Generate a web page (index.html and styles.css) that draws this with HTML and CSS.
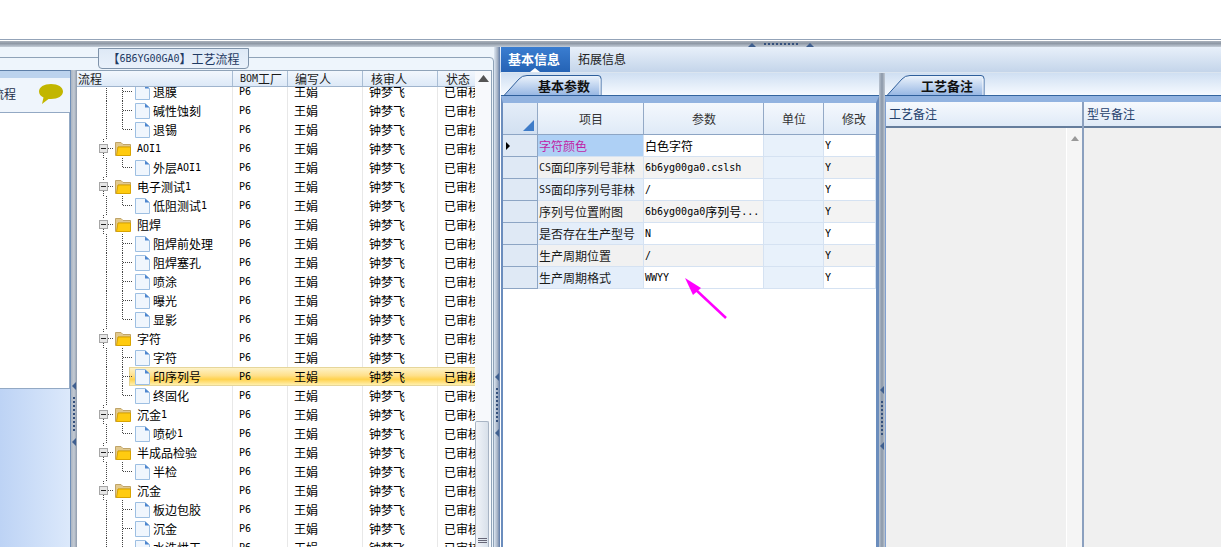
FILE: index.html
```html
<!DOCTYPE html>
<html lang="zh">
<head>
<meta charset="utf-8">
<title>工艺流程</title>
<link rel="stylesheet" href="styles.css">
</head>
<body>
<svg class="defs" width="0" height="0">
  <defs>
    <linearGradient id="tabfill" x1="0" y1="0" x2="0" y2="1">
      <stop offset="0" stop-color="#edf4fc"/>
      <stop offset="1" stop-color="#96b6e3"/>
    </linearGradient>
    <symbol id="tabshape" viewBox="0 0 98 22">
      <path d="M0 21.500L15 5Q18 1.500 23 1.500H94Q97 1.500 97 4.500V21.500Z" fill="url(#tabfill)" stroke="#2f5f9b"/>
      <path d="M96 5V21" stroke="#fff"/>
    </symbol>
    <symbol id="doc" viewBox="0 0 15 16">
      <path d="M.5.5H10L14.5 4.500V15.500H.5Z" fill="#f0f6fd" stroke="#9dbfe2"/>
      <path d="M10 .5V4.500H14.500Z" fill="#4d86cf"/>
    </symbol>
    <symbol id="folder" viewBox="0 0 16 14">
      <path d="M.5 13.500V.5H6L8 2.500H15.500V5H3V13.500Z" fill="#e2c98e" stroke="#c0a468"/>
      <path d="M3 5H15.500V13.500H1.500Z" fill="#ffcb10" stroke="#d9a400"/>
    </symbol>
    <symbol id="box" viewBox="0 0 9 9">
      <rect x=".5" y=".5" width="8" height="8" fill="#e6e6e6" stroke="#a6a6a6"/>
      <path d="M2 4.500H7" stroke="#222"/>
    </symbol>
    <symbol id="g-folder" viewBox="0 0 60 19">
      <path d="M26.500 0V4M26.500 14V19M31 9.500H36" stroke="#444" stroke-dasharray="1 1"/>
      <use href="#box" x="22" y="5" width="9" height="9"/>
      <use href="#folder" x="38" y="3" width="16" height="14"/>
    </symbol>
    <symbol id="g-mid" viewBox="0 0 70 19">
      <path d="M26.500 0V19M42.500 0V19M43 9.500H52" stroke="#444" stroke-dasharray="1 1"/>
      <use href="#doc" x="55" y="2" width="15" height="16"/>
    </symbol>
    <symbol id="g-last" viewBox="0 0 70 19">
      <path d="M26.500 0V19M42.500 0V9.500M43 9.500H52" stroke="#444" stroke-dasharray="1 1"/>
      <use href="#doc" x="55" y="2" width="15" height="16"/>
    </symbol>
  </defs>
</svg>

<div class="top-blank"></div>
<div class="h-split">
  <i class="tri-up"></i><span class="grip-h"></span><i class="tri-up"></i>
</div>

<main class="work">
  <section class="flow-group">
    <div class="flow-title">【<span class="mono">6B6YG00GA0</span>】工艺流程</div>
    <div class="flow-body">
      <aside class="side">
        <div class="side-band"></div>
        <div class="side-head">
          <span class="side-name">流程</span>
          <svg class="bubble" width="26" height="22" viewBox="0 0 26 22">
            <path d="M13 1C20 1 25 4 25 8.500S20 16 13 16H10.500L4 21L5.500 14.500C2.500 13 1 11 1 8.500C1 4 6 1 13 1Z" fill="#c2b600"/>
          </svg>
        </div>
        <div class="side-box"></div>
        <div class="side-rest"></div>
      </aside>

      <div class="v-split left-split">
        <i class="tri-left"></i><span class="grip-v"></span><i class="tri-left"></i>
      </div>

      <div class="tree-grid">
        <div class="tree-main">
          <div class="tree-head">
            <span class="th-tree">流程</span>
            <span class="th"><span class="mono">BOM</span>工厂</span>
            <span class="th">编写人</span>
            <span class="th th-w">核审人</span>
            <span class="th th-w">状态</span>
          </div>
          <div class="tree-view">
            <div class="tree-rows">
              <div class="row"><div class="tc"><svg class="g-c"><use href="#g-mid"/></svg>退膜</div><div class="c mono">P6</div><div class="c">王娟</div><div class="c">钟梦飞</div><div class="c">已审核</div></div>
              <div class="row"><div class="tc"><svg class="g-c"><use href="#g-mid"/></svg>碱性蚀刻</div><div class="c mono">P6</div><div class="c">王娟</div><div class="c">钟梦飞</div><div class="c">已审核</div></div>
              <div class="row"><div class="tc"><svg class="g-c"><use href="#g-last"/></svg>退锡</div><div class="c mono">P6</div><div class="c">王娟</div><div class="c">钟梦飞</div><div class="c">已审核</div></div>
              <div class="row"><div class="tc"><svg class="g-f"><use href="#g-folder"/></svg><span class="mono">AOI1</span></div><div class="c mono">P6</div><div class="c">王娟</div><div class="c">钟梦飞</div><div class="c">已审核</div></div>
              <div class="row"><div class="tc"><svg class="g-c"><use href="#g-last"/></svg>外层<span class="mono">AOI1</span></div><div class="c mono">P6</div><div class="c">王娟</div><div class="c">钟梦飞</div><div class="c">已审核</div></div>
              <div class="row"><div class="tc"><svg class="g-f"><use href="#g-folder"/></svg>电子测试<span class="mono">1</span></div><div class="c mono">P6</div><div class="c">王娟</div><div class="c">钟梦飞</div><div class="c">已审核</div></div>
              <div class="row"><div class="tc"><svg class="g-c"><use href="#g-last"/></svg>低阻测试<span class="mono">1</span></div><div class="c mono">P6</div><div class="c">王娟</div><div class="c">钟梦飞</div><div class="c">已审核</div></div>
              <div class="row"><div class="tc"><svg class="g-f"><use href="#g-folder"/></svg>阻焊</div><div class="c mono">P6</div><div class="c">王娟</div><div class="c">钟梦飞</div><div class="c">已审核</div></div>
              <div class="row"><div class="tc"><svg class="g-c"><use href="#g-mid"/></svg>阻焊前处理</div><div class="c mono">P6</div><div class="c">王娟</div><div class="c">钟梦飞</div><div class="c">已审核</div></div>
              <div class="row"><div class="tc"><svg class="g-c"><use href="#g-mid"/></svg>阻焊塞孔</div><div class="c mono">P6</div><div class="c">王娟</div><div class="c">钟梦飞</div><div class="c">已审核</div></div>
              <div class="row"><div class="tc"><svg class="g-c"><use href="#g-mid"/></svg>喷涂</div><div class="c mono">P6</div><div class="c">王娟</div><div class="c">钟梦飞</div><div class="c">已审核</div></div>
              <div class="row"><div class="tc"><svg class="g-c"><use href="#g-mid"/></svg>曝光</div><div class="c mono">P6</div><div class="c">王娟</div><div class="c">钟梦飞</div><div class="c">已审核</div></div>
              <div class="row"><div class="tc"><svg class="g-c"><use href="#g-last"/></svg>显影</div><div class="c mono">P6</div><div class="c">王娟</div><div class="c">钟梦飞</div><div class="c">已审核</div></div>
              <div class="row"><div class="tc"><svg class="g-f"><use href="#g-folder"/></svg>字符</div><div class="c mono">P6</div><div class="c">王娟</div><div class="c">钟梦飞</div><div class="c">已审核</div></div>
              <div class="row"><div class="tc"><svg class="g-c"><use href="#g-mid"/></svg>字符</div><div class="c mono">P6</div><div class="c">王娟</div><div class="c">钟梦飞</div><div class="c">已审核</div></div>
              <div class="row selected"><div class="tc"><svg class="g-c"><use href="#g-mid"/></svg>印序列号</div><div class="c mono">P6</div><div class="c">王娟</div><div class="c">钟梦飞</div><div class="c">已审核</div></div>
              <div class="row"><div class="tc"><svg class="g-c"><use href="#g-last"/></svg>终固化</div><div class="c mono">P6</div><div class="c">王娟</div><div class="c">钟梦飞</div><div class="c">已审核</div></div>
              <div class="row"><div class="tc"><svg class="g-f"><use href="#g-folder"/></svg>沉金<span class="mono">1</span></div><div class="c mono">P6</div><div class="c">王娟</div><div class="c">钟梦飞</div><div class="c">已审核</div></div>
              <div class="row"><div class="tc"><svg class="g-c"><use href="#g-last"/></svg>喷砂<span class="mono">1</span></div><div class="c mono">P6</div><div class="c">王娟</div><div class="c">钟梦飞</div><div class="c">已审核</div></div>
              <div class="row"><div class="tc"><svg class="g-f"><use href="#g-folder"/></svg>半成品检验</div><div class="c mono">P6</div><div class="c">王娟</div><div class="c">钟梦飞</div><div class="c">已审核</div></div>
              <div class="row"><div class="tc"><svg class="g-c"><use href="#g-last"/></svg>半检</div><div class="c mono">P6</div><div class="c">王娟</div><div class="c">钟梦飞</div><div class="c">已审核</div></div>
              <div class="row"><div class="tc"><svg class="g-f"><use href="#g-folder"/></svg>沉金</div><div class="c mono">P6</div><div class="c">王娟</div><div class="c">钟梦飞</div><div class="c">已审核</div></div>
              <div class="row"><div class="tc"><svg class="g-c"><use href="#g-mid"/></svg>板边包胶</div><div class="c mono">P6</div><div class="c">王娟</div><div class="c">钟梦飞</div><div class="c">已审核</div></div>
              <div class="row"><div class="tc"><svg class="g-c"><use href="#g-mid"/></svg>沉金</div><div class="c mono">P6</div><div class="c">王娟</div><div class="c">钟梦飞</div><div class="c">已审核</div></div>
              <div class="row"><div class="tc"><svg class="g-c"><use href="#g-mid"/></svg>水洗烘干</div><div class="c mono">P6</div><div class="c">王娟</div><div class="c">钟梦飞</div><div class="c">已审核</div></div>
            </div>
          </div>
        </div>
        <div class="tree-scroll">
          <svg class="sb-up" width="11" height="7" viewBox="0 0 11 7"><path d="M5.500 0L11 7H0Z" fill="#555"/></svg>
          <div class="sb-thumb"><span class="sb-grip"></span></div>
        </div>
      </div>
    </div>
  </section>

  <div class="v-split mid-split">
    <i class="tri-left"></i><span class="grip-v"></span><i class="tri-left"></i>
  </div>

  <section class="info">
    <div class="info-tabs">
      <span class="info-tab active">基本信息</span>
      <span class="info-tab">拓展信息</span>
    </div>
    <div class="info-body">
      <div class="pane pane-params">
        <div class="strip">
          <span class="strip-tab"><svg class="tab-bg" width="98" height="22"><use href="#tabshape"/></svg><span class="tab-text">基本参数</span></span>
        </div>
        <div class="pane-in">
          <div class="param-head">
            <span class="corner"><i class="corner-tri"></i></span>
            <span>项目</span><span>参数</span><span>单位</span><span class="head-last">修改</span>
          </div>
          <div class="param-row first">
            <span class="rh"><i class="rh-mark"></i></span><span class="item cur">字符颜色</span><span class="val">白色字符</span><span class="unit"></span><span class="val mono">Y</span>
          </div>
          <div class="param-row alt">
            <span class="rh"></span><span class="item"><span class="mono">CS</span>面印序列号菲林</span><span class="val mono">6b6yg00ga0.cslsh</span><span class="unit"></span><span class="val mono">Y</span>
          </div>
          <div class="param-row">
            <span class="rh"></span><span class="item"><span class="mono">SS</span>面印序列号菲林</span><span class="val mono">/</span><span class="unit"></span><span class="val mono">Y</span>
          </div>
          <div class="param-row alt">
            <span class="rh"></span><span class="item">序列号位置附图</span><span class="val"><span class="mono">6b6yg00ga0</span>序列号<span class="mono">...</span></span><span class="unit"></span><span class="val mono">Y</span>
          </div>
          <div class="param-row">
            <span class="rh"></span><span class="item">是否存在生产型号</span><span class="val mono">N</span><span class="unit"></span><span class="val mono">Y</span>
          </div>
          <div class="param-row alt">
            <span class="rh"></span><span class="item">生产周期位置</span><span class="val mono">/</span><span class="unit"></span><span class="val mono">Y</span>
          </div>
          <div class="param-row">
            <span class="rh"></span><span class="item">生产周期格式</span><span class="val mono">WWYY</span><span class="unit"></span><span class="val mono">Y</span>
          </div>
          <svg class="arrow" width="50" height="48" viewBox="0 0 50 48">
            <path d="M48 46L17 17" stroke="#ff00ff" stroke-width="2.500"/>
            <path d="M7 6L23 16L15 23Z" fill="#ff00ff"/>
          </svg>
        </div>
      </div>

      <div class="pane-split">
        <i class="tri-left"></i><span class="grip-v"></span><i class="tri-left"></i>
      </div>

      <div class="pane pane-notes">
        <div class="strip">
          <span class="strip-tab"><svg class="tab-bg" width="98" height="22"><use href="#tabshape"/></svg><span class="tab-text">工艺备注</span></span>
        </div>
        <div class="notes-in">
          <div class="note-col first-col">
            <div class="note-head">工艺备注</div>
            <div class="note-body">
              <div class="note-scroll"><svg width="8" height="5" viewBox="0 0 8 5"><path d="M4 0L8 5H0Z" fill="#999"/></svg></div>
            </div>
          </div>
          <div class="note-col">
            <div class="note-head">型号备注</div>
            <div class="note-body"></div>
          </div>
        </div>
      </div>
    </div>
  </section>
</main>
</body>
</html>
```
FILE: styles.css
```css
* { box-sizing: border-box; }
html, body { margin: 0; height: 100%; }
body {
  width: 1221px; height: 547px; overflow: hidden; background: #fff;
  font: 12px/1 "Noto Sans CJK SC", "Liberation Sans", sans-serif; color: #000;
  display: flex; flex-direction: column;
}
.defs { position: absolute; }
.mono { font-family: "DejaVu Sans Mono", "Noto Sans CJK SC", monospace; font-size: 10px; font-weight: 400; }
i { display: block; }

.top-blank { height: 39px; flex: none; }
.h-split {
  height: 8px; flex: none; display: flex; justify-content: center; align-items: center; gap: 8px;
  padding-left: 340px;
  border-top: 1px solid #93a3b8;
  background: linear-gradient(#fff 0 1px, #a9b1bb 1px, #8f99a6 50%, #c4cdd8);
}
.tri-up { width: 0; height: 0; border: 4px solid transparent; border-top: 0; border-bottom: 4px solid #3f5f8f; margin-top: 2px; }
.grip-h { width: 34px; height: 2px; margin-top: 1px; background: repeating-linear-gradient(90deg, #34507c 0 2px, transparent 2px 4px); }

.work { flex: 1; min-height: 0; display: flex; }

.flow-group {
  width: 494px; flex: none; position: relative; background: #eef5fc; padding-top: 23px; display: flex; flex-direction: column;
}
.flow-group::before {
  content: ""; position: absolute; left: -4px; right: 0; top: 10px; bottom: -4px;
  border: 1px solid #8fa3b8; border-radius: 4px; pointer-events: none;
}
.flow-title {
  position: absolute; left: 98px; top: 1px; width: 151px; height: 21px; z-index: 2;
  display: flex; align-items: center; justify-content: center;
  background: linear-gradient(#dee9f6, #e9f1fb); border: 1px solid #7f93aa; border-radius: 0 0 4px 4px;
  color: #1f3a63;
}
.flow-body { flex: 1; min-height: 0; display: flex; }

.side { width: 71px; flex: none; display: flex; flex-direction: column; border-top: 1px solid #5e7fa8; border-right: 1px solid #6f8fb8; overflow: hidden; }
.side-band { height: 7px; flex: none; background: #bcd3ee; }
.side-head { height: 34px; flex: none; background: #eff5fc; display: flex; align-items: center; justify-content: space-between; padding: 0 6px 2px 0; }
.side-name { margin-left: -8px; color: #1f2f4a; font-size: 12px; }
.side-box { height: 277px; flex: none; background: #fff; border: 1px solid #93a9c4; border-left: 0; }
.side-rest { flex: 1; background: linear-gradient(90deg, #bdd3f5, #dce9fb); }

.v-split {
  width: 6px; flex: none; display: flex; flex-direction: column; align-items: center; justify-content: center; gap: 7px;
}
.left-split { padding-top: 211px; background: linear-gradient(90deg, #aab4c2, #c3cad3 50%, #8f9bac); }
.mid-split { padding-top: 216px; background: linear-gradient(90deg, #dce6f2, #a8b4c6 55%, #5f7ba6); }
.tri-left { width: 0; height: 0; border: 4px solid transparent; border-left: 0; border-right: 4px solid #3f5f8f; }
.grip-v { width: 2px; height: 34px; flex: none; background: repeating-linear-gradient(#34507c 0 2px, transparent 2px 4px); }

.tree-grid { width: 415px; flex: none; display: flex; background: #fff; border-top: 1px solid #8fa3b8; border-right: 1px solid #8fa3b8; }
.tree-main { width: 398px; flex: none; display: flex; flex-direction: column; overflow: hidden; }
.tree-head {
  height: 16px; flex: none; display: grid; grid-template-columns: 156px 55px 75px 75px 37px;
  background: linear-gradient(#f2f7fd, #dde9f7); border-bottom: 1px solid #9fb4cd; color: #1b1b1b; position: relative; z-index: 1;
}
.tree-head > span { display: flex; align-items: center; border-right: 1px solid #a9bdd4; white-space: nowrap; overflow: hidden; }
.tree-head > span:last-child { border-right: 0; }
.th-tree { padding-left: 1px; }
.th { padding-left: 7px; }
.th-w { padding-left: 8px; }
.tree-view { flex: 1; min-height: 0; overflow: hidden; }
.tree-rows { margin-top: -5px; }
.row { height: 19px; display: grid; grid-template-columns: 156px 55px 75px 75px 37px; }
.tc { display: flex; align-items: center; white-space: nowrap; border-right: 1px solid #e8e8e8; }
.g-c { width: 76px; height: 19px; flex: none; }
.g-f { width: 60px; height: 19px; flex: none; }
.c { display: flex; align-items: center; padding-left: 6px; white-space: nowrap; overflow: hidden; border-right: 1px solid #e8e8e8; }
.c:last-child { border-right: 0; }
.selected {
  background-image: linear-gradient(#e3d293, #e3d293), linear-gradient(#e6d69a 0 1px, #fdf2c8 1px, #ffe08a 45%, #ffd24e 65%, #fff0ae calc(100% - 1px), #e6d69a calc(100% - 1px));
  background-repeat: no-repeat;
  background-size: 1px 100%, calc(100% - 52px) 100%;
  background-position: 52px 0, 52px 0;
}
.selected .tc, .selected .c { border-right-color: transparent; }

.tree-scroll { flex: 1; display: flex; flex-direction: column; align-items: center; padding-top: 4px; background: #f7f9fc; }
.sb-thumb { margin-top: 339px; width: 14px; align-self: flex-start; flex: 1; background: linear-gradient(90deg, #f1f4f9, #d8e0ea); border: 1px solid #a8b4c4; border-bottom: 0; border-radius: 2px 2px 0 0; display: flex; align-items: flex-end; justify-content: center; padding-bottom: 3px; }
.sb-grip { width: 9px; height: 6px; background: repeating-linear-gradient(#667 0 1px, transparent 1px 2px); }

.info { flex: 1; min-width: 0; display: flex; flex-direction: column; }
.info-tabs { height: 26px; flex: none; display: flex; align-items: flex-start; padding-left: 1px; background: linear-gradient(#e8f0fa, #c4d5ea); border-bottom: 1px solid #dbe5f0; }
.info-tab { height: 25px; display: flex; align-items: center; padding: 0 8px 2px; color: #222; }
.info-tab.active { width: 69px; justify-content: center; padding: 0 3px 2px 0; background: linear-gradient(#3a7dd0, #2563b5); color: #fff; font-weight: 700; font-size: 13px; position: relative; }
.info-tab.active::after { content: ""; position: absolute; left: 29px; bottom: 0; border: 5px solid transparent; border-top: 0; border-bottom: 4px solid #fff; }
.info-body { flex: 1; min-height: 0; display: flex; }
.pane { display: flex; flex-direction: column; background: #fff; }
.pane-params { width: 378px; flex: none; margin-left: 1px; }
.pane-notes { flex: 1; min-width: 0; }
.pane-split { width: 6px; flex: none; display: flex; flex-direction: column; align-items: center; justify-content: center; gap: 7px; padding-top: 216px; background: linear-gradient(90deg, #b9c3d0, #8a97a8 50%, #c0c8d2); }
.strip { height: 23px; flex: none; display: flex; align-items: flex-end; padding-left: 3px; background: linear-gradient(#cfdff2, #f6faff); border-bottom: 1px solid #34659f; }
.strip-tab { width: 98px; height: 22px; margin-bottom: -1px; position: relative; display: flex; align-items: center; padding-left: 34px; }
.tab-bg { position: absolute; left: 0; top: 0; }
.tab-text { position: relative; font-size: 13px; font-weight: 700; color: #111; }
.pane-notes .strip { padding-left: 2px; }
.pane-in { flex: 1; min-height: 0; position: relative; border-top: 7px solid #92b3e0; border-left: 2px solid #6b8dbd; border-right: 3px solid #6b8dbd; }
.param-head, .param-row { display: grid; grid-template-columns: 35px 106px 120px 60px 52px; }
.param-head { height: 32px; background: linear-gradient(#f4f8fd, #dfeaf7); border-bottom: 1px solid #8da5c4; color: #333; }
.param-head > span { display: flex; align-items: center; justify-content: center; border-right: 1px solid #93a9c6; padding-left: 1px; }
.param-head > span.head-last { border-right: 0; padding-left: 8px; }
.corner { position: relative; background: linear-gradient(#e4edf8, #d2e0f1); }
.corner-tri { position: absolute; right: 3px; bottom: 3px; border-left: 11px solid transparent; border-bottom: 11px solid #3f7cc8; }
.param-row { height: 22px; background: #fff; }
.param-row > span { display: flex; align-items: center; padding-top: 1px; white-space: nowrap; overflow: hidden; border-bottom: 1px solid #d5e2f2; border-right: 1px solid #d5e2f2; }
.param-row > .rh { background: #dfe9f5; border-bottom-color: #8da5c4; border-right-color: #8da5c4; padding-left: 3px; }
.rh-mark { border-left: 4px solid #000; border-top: 4px solid transparent; border-bottom: 4px solid transparent; }
.param-row > .item { background: #e4eefa; padding-left: 1px; color: #1a1a1a; }
.param-row.alt > .item { background: #f1f1f1; }
.param-row.alt { background: #f3f3f3; }
.param-row > .item.cur { background: #aed0f5; color: #c01fa6; }
.param-row > .val { padding-left: 1px; }
.param-row > .unit { background: #e8f1fb; }
.arrow { position: absolute; left: 175px; top: 169px; }

.notes-in { flex: 1; min-height: 0; display: grid; grid-template-columns: 198px 1fr; border-top: 6px solid #92b3e0; border-left: 1px solid #7f9fd0; background: #f0f0f0; }
.note-col { display: flex; flex-direction: column; border-right: 2px solid #8ba0bf; }
.note-col:last-child { border-right: 0; }
.note-head { height: 26px; flex: none; display: flex; align-items: center; padding-left: 3px; color: #24406b; background: linear-gradient(#f6f9fd, #dfeaf7); border-bottom: 2px solid #657d9c; }
.note-body { flex: 1; display: flex; justify-content: flex-end; background: #f0f0f0; }
.note-scroll { width: 16px; background: #f5f5f5; border-left: 1px solid #fff; display: flex; justify-content: center; padding-top: 8px; }
.note-scroll svg { display: block; }
```
